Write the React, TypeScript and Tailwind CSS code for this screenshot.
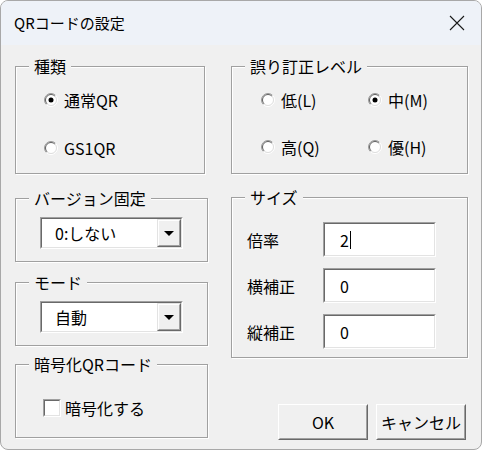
import React from "react";

const etched =
  "relative border border-[#a0a0a0] shadow-[inset_1px_1px_0_#fff,1px_1px_0_#fff]";

function Group({
  label,
  className,
  children,
}: {
  label: string;
  className: string;
  children: React.ReactNode;
}) {
  return (
    <div className={`${etched} ${className}`}>
      <span className="absolute left-[13px] top-[-11px] bg-[#f0f0f0] px-[5px] text-[16px] leading-[20px] whitespace-nowrap">
        {label}
      </span>
      {children}
    </div>
  );
}

function Radio({ label, checked }: { label: string; checked?: boolean }) {
  return (
    <div className="flex h-[20px] items-center gap-[6px] text-[16px] leading-[20px]">
      <svg width="14" height="14" viewBox="0 0 14 14" className="shrink-0">
        <circle cx="7" cy="7" r="6" fill="#fff" />
        <path d="M2.4 11.6 A6.5 6.5 0 0 1 11.6 2.4" fill="none" stroke="#9a9a9a" strokeWidth="1" />
        <path d="M11.6 2.4 A6.5 6.5 0 0 1 2.4 11.6" fill="none" stroke="#ffffff" strokeWidth="1" />
        <path d="M3.1 10.9 A5.5 5.5 0 0 1 10.9 3.1" fill="none" stroke="#5f5f5f" strokeWidth="1" />
        <path d="M10.9 3.1 A5.5 5.5 0 0 1 3.1 10.9" fill="none" stroke="#dcdcdc" strokeWidth="1" />
        {checked && <circle cx="7" cy="7" r="2.5" fill="#000" />}
      </svg>
      <span>{label}</span>
    </div>
  );
}

function Sunken({ className, children }: { className: string; children: React.ReactNode }) {
  return (
    <div className={`border border-t-[#a0a0a0] border-l-[#a0a0a0] border-b-white border-r-white ${className}`}>
      <div className="flex h-full w-full border border-t-[#696969] border-l-[#696969] border-b-[#e3e3e3] border-r-[#e3e3e3] bg-white">
        {children}
      </div>
    </div>
  );
}

function Combo({ value }: { value: string }) {
  return (
    <Sunken className="h-[32px] w-[143px]">
      <div className="flex flex-1 items-center pl-[13px] text-[16px] leading-[20px]">{value}</div>
      <div className="flex w-[24px] items-center justify-center border border-t-[#e3e3e3] border-l-[#e3e3e3] border-b-[#696969] border-r-[#696969] bg-[#f0f0f0]">
        <div className="flex h-full w-full items-center justify-center border border-t-white border-l-white border-b-[#a0a0a0] border-r-[#a0a0a0]">
          <svg width="10" height="5" viewBox="0 0 10 5">
            <path d="M0 0 H10 L5 5 Z" fill="#000" />
          </svg>
        </div>
      </div>
    </Sunken>
  );
}

function Field({ label, value, caret }: { label: string; value: string; caret?: boolean }) {
  return (
    <div className="flex h-[35px] items-center">
      <span className="w-[76px] text-[16px] leading-[20px]">{label}</span>
      <Sunken className="h-[35px] w-[113px]">
        <div className="flex items-center pl-[15px] text-[16px] leading-[20px]">
          {value}
          {caret && <span className="ml-[1px] h-[18px] w-[1px] bg-black" />}
        </div>
      </Sunken>
    </div>
  );
}

function Button({ label }: { label: string }) {
  return (
    <div className="h-[36px] w-[90px] border border-t-white border-l-white border-b-[#696969] border-r-[#696969] bg-[#f0f0f0]">
      <div className="flex h-full w-full items-center justify-center border border-t-[#f0f0f0] border-l-[#f0f0f0] border-b-[#a0a0a0] border-r-[#a0a0a0] text-[16px] leading-[20px]">
        {label}
      </div>
    </div>
  );
}

export default function App() {
  return (
    <div className="h-[452px] w-[484px] bg-white font-['Noto_Sans_CJK_JP','Liberation_Sans',sans-serif] text-black">
      <div className="flex h-[450px] w-[482px] flex-col overflow-hidden rounded-[8px] border border-[#a8a8a8] bg-[#f0f0f0]">
        <div className="flex h-[44px] shrink-0 items-center justify-between bg-[#eef2f8] pl-[13px] pr-[16px]">
          <span className="text-[15px] leading-[20px]">QRコードの設定</span>
          <svg width="16" height="16" viewBox="0 0 16 16">
            <path d="M1 1 L15 15 M15 1 L1 15" stroke="#1a1a1a" strokeWidth="1.1" fill="none" />
          </svg>
        </div>
        <div className="flex pl-[14px] pt-[21px]">
          <div className="flex flex-col">
            <Group label="種類" className="h-[108px] w-[190px]">
              <div className="flex flex-col gap-[28px] pl-[28px] pt-[23px]">
                <Radio label="通常QR" checked />
                <Radio label="GS1QR" />
              </div>
            </Group>
            <Group label="バージョン固定" className="mt-[24px] h-[64px] w-[193px]">
              <div className="pl-[24px] pt-[18px]">
                <Combo value="0:しない" />
              </div>
            </Group>
            <Group label="モード" className="mt-[20px] h-[64px] w-[193px]">
              <div className="pl-[24px] pt-[18px]">
                <Combo value="自動" />
              </div>
            </Group>
            <Group label="暗号化QRコード" className="mt-[18px] h-[74px] w-[193px]">
              <div className="mt-[33px] flex h-[20px] items-center gap-[4px] pl-[27px] text-[16px] leading-[20px]">
                <Sunken className="h-[18px] w-[18px]">
                  <span />
                </Sunken>
                <span>暗号化する</span>
              </div>
            </Group>
          </div>
          <div className="ml-[23px] flex flex-col">
            <Group label="誤り訂正レベル" className="h-[108px] w-[237px]">
              <div className="grid grid-cols-[107px_auto] gap-y-[27px] pl-[29px] pt-[23px]">
                <Radio label="低(L)" />
                <Radio label="中(M)" checked />
                <Radio label="高(Q)" />
                <Radio label="優(H)" />
              </div>
            </Group>
            <Group label="サイズ" className="mt-[23px] h-[161px] w-[237px]">
              <div className="flex flex-col gap-[11px] pl-[15px] pt-[24px]">
                <Field label="倍率" value="2" caret />
                <Field label="横補正" value="0" />
                <Field label="縦補正" value="0" />
              </div>
            </Group>
            <div className="ml-[47px] mt-[46px] flex gap-[8px]">
              <Button label="OK" />
              <Button label="キャンセル" />
            </div>
          </div>
        </div>
      </div>
    </div>
  );
}
